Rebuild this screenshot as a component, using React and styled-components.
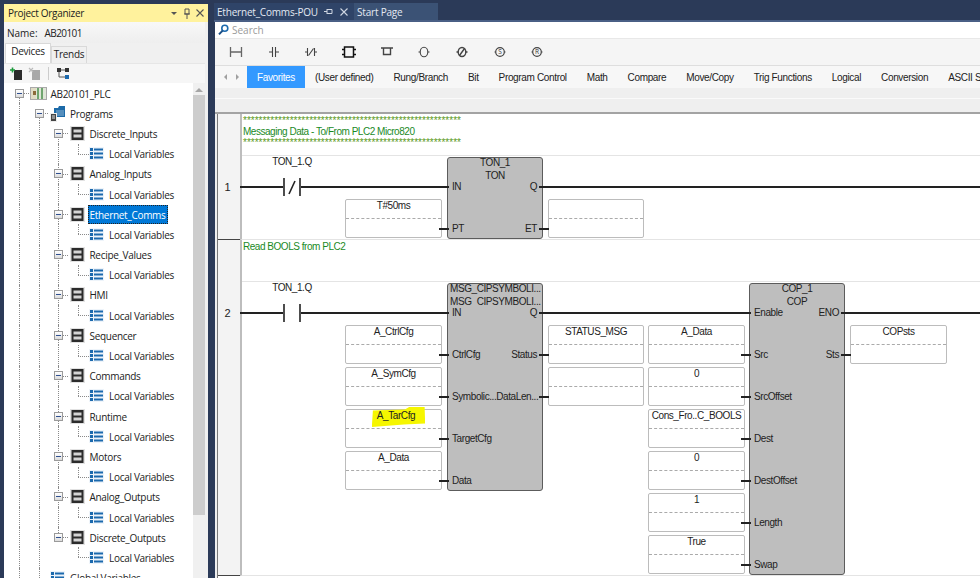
import React from "react";
import styled, { createGlobalStyle } from "styled-components";

const GlobalStyle = createGlobalStyle`
    html, body {
        margin: 0;
        padding: 0;
        background: #2b3a58;
    }
    * {
        box-sizing: border-box;
    }
`;

const uiFont = `"Open Sans", "Noto Sans", sans-serif`;
const ladderFont = `"Liberation Sans", Arial, sans-serif`;

const Page = styled.div`
    width: 980px;
    height: 578px;
    overflow: hidden;
    display: flex;
    background: #2b3a58;
    padding: 4px 0 0 4px;
    font-family: ${uiFont};
    color: #222;
`;

/* ---------- project organizer ---------- */

const Organizer = styled.aside`
    width: 204px;
    flex: none;
    height: 574px;
    display: flex;
    flex-direction: column;
    background: #f0f0f0;
    padding-right: 3px;
`;

const TitleBar = styled.div`
    height: 18px;
    margin-right: -3px;
    flex: none;
    display: flex;
    align-items: center;
    background: #fff29d;
    padding: 0 3px 0 4px;
    font-size: 10px;
    letter-spacing: -0.3px;
    span {
        flex: 1;
    }
    svg {
        margin-left: 3px;
    }
`;

const NameRow = styled.div`
    height: 21px;
    flex: none;
    display: flex;
    align-items: center;
    gap: 7px;
    padding-left: 3px;
    font-size: 10px;
    background: linear-gradient(to bottom, #f8f8f8, #eeeeee);
    span + span {
        letter-spacing: -0.6px;
    }
`;

const PanelTabs = styled.div`
    height: 20px;
    flex: none;
    display: flex;
    align-items: flex-end;
    padding-left: 1px;
`;

const PanelTab = styled.div`
    height: ${(props) => (props.$active ? "20px" : "17px")};
    width: ${(props) => props.$width}px;
    background: ${(props) => (props.$active ? "#fff" : "#f0f0f0")};
    border: 1px solid #d9d9d9;
    border-bottom: none;
    text-align: center;
    font-size: 10px;
    line-height: 15px;
    letter-spacing: -0.3px;
`;

const PanelToolbar = styled.div`
    height: 20px;
    flex: none;
    display: flex;
    align-items: center;
    background: #f6f6f6;
    border-top: 1px solid #e6e6e6;
    padding-left: 6px;
    gap: 6px;
    i {
        width: 1px;
        height: 13px;
        background: #ccc;
        margin: 0 2px;
    }
`;

const TreeWrap = styled.div`
    flex: 1;
    min-height: 0;
    display: flex;
    background: #fff;
`;

const Tree = styled.div`
    flex: 1;
    overflow: hidden;
    padding: 0 0 0 6px;
`;

const ScrollBar = styled.div`
    width: 12px;
    flex: none;
    background: #f0f0f0;
    display: flex;
    flex-direction: column;
    align-items: center;
    padding-top: 5px;
    i {
        width: 0;
        height: 0;
        border-left: 4px solid transparent;
        border-right: 4px solid transparent;
        border-bottom: 4px solid #a6a6a6;
    }
    b {
        width: 100%;
        height: 420px;
        margin-top: 3px;
        background: #cdcdcd;
    }
`;

const TreeRow = styled.div`
    height: 20.2px;
    display: flex;
    align-items: stretch;
    white-space: nowrap;
`;

const Guide = styled.div`
    width: 19.5px;
    flex: none;
    position: relative;
    &::before {
        content: "";
        display: ${(props) => (props.$off ? "none" : "block")};
        position: absolute;
        left: 9px;
        top: 0;
        bottom: 0;
        border-left: 1px dotted #8a8a8a;
    }
`;

const Branch = styled(Guide)`
    &::before {
        top: ${(props) => (props.$noTop ? "50%" : "0")};
        bottom: ${(props) => (props.$noBottom ? "50%" : "0")};
    }
    &::after {
        content: "";
        position: absolute;
        left: 9px;
        right: ${(props) => (props.$short ? "1px" : "-1px")};
        top: 50%;
        border-top: 1px dotted #8a8a8a;
    }
`;

const Expander = styled.span`
    position: absolute;
    z-index: 1;
    left: 5px;
    top: 5.5px;
    width: 9px;
    height: 9px;
    border: 1px solid #9a9a9a;
    background: linear-gradient(to bottom, #fff, #dcdcdc);
    &::after {
        content: "";
        position: absolute;
        left: 1px;
        right: 1px;
        top: 3px;
        height: 1px;
        background: #2f4f8f;
    }
`;

const NodeIcon = styled.span`
    flex: none;
    width: ${(props) => props.$width}px;
    display: flex;
    align-items: center;
    justify-content: center;
    margin-left: ${(props) => props.$left || 0}px;
`;

const NodeLabel = styled.span`
    align-self: center;
    margin-left: ${(props) => props.$left}px;
    font-size: 10px;
    letter-spacing: -0.3px;
    line-height: 18px;
    height: 19px;
    padding: 0 1px;
    border: 1px dotted ${(props) => (props.$selected ? "#222" : "transparent")};
    background: ${(props) => (props.$selected ? "#0078d7" : "transparent")};
    color: ${(props) => (props.$selected ? "#fff" : "#222")};
`;

/* ---------- editor ---------- */

const Editor = styled.main`
    flex: 1;
    min-width: 0;
    display: flex;
    flex-direction: column;
    margin-top: -1px;
    margin-left: 6px;
`;

const DocTabs = styled.div`
    height: 17px;
    flex: none;
    display: flex;
`;

const DocTab = styled.div`
    width: ${(props) => props.$width}px;
    display: flex;
    align-items: center;
    gap: 6px;
    padding-left: 3px;
    background: ${(props) => (props.$active ? "#2f4468" : "#3b5275")};
    color: #e4e9f2;
    font-size: 10px;
    letter-spacing: -0.2px;
    white-space: nowrap;
`;

const DocRule = styled.div`
    height: 2px;
    flex: none;
    background: #4a5f85;
`;

const Content = styled.div`
    flex: 1;
    min-height: 0;
    margin-left: 1px;
    display: flex;
    flex-direction: column;
    background: #efefef;
`;

const SearchRow = styled.div`
    height: 17px;
    flex: none;
    display: flex;
    align-items: center;
    gap: 3px;
    padding-left: 3px;
    background: #fff;
    border-bottom: 1px solid #e8e8e8;
    color: #9a9a9a;
    font-size: 10px;
`;

const InstrBar = styled.div`
    height: 27px;
    flex: none;
    display: flex;
    align-items: center;
    padding-left: 2px;
    background: #f5f5f5;
    border-bottom: 1px solid #dedede;
`;

const InstrButton = styled.div`
    width: 37.7px;
    display: flex;
    justify-content: center;
`;

const CategoryBar = styled.div`
    height: 22px;
    flex: none;
    display: flex;
    align-items: stretch;
    background: #f7f7f7;
    overflow: hidden;
    white-space: nowrap;
    font-family: ${ladderFont};
    font-size: 10px;
    letter-spacing: -0.35px;
`;

const CategoryArrows = styled.div`
    width: 32px;
    flex: none;
    display: flex;
    align-items: center;
    gap: 9px;
    padding-left: 9px;
    i {
        width: 0;
        height: 0;
        border-top: 3px solid transparent;
        border-bottom: 3px solid transparent;
    }
    i:first-child {
        border-right: 3px solid #a0a0a0;
    }
    i:last-child {
        border-left: 3px solid #a0a0a0;
    }
`;

const Category = styled.div`
    flex: none;
    display: flex;
    align-items: center;
    padding: 0 10px;
    background: ${(props) => (props.$active ? "#3399ff" : "transparent")};
    color: ${(props) => (props.$active ? "#fff" : "#222")};
`;

const BandRow = styled.div`
    height: 26px;
    flex: none;
    border-bottom: 2px solid #a3a3a3;
    &::before {
        content: "";
        display: block;
        height: 1px;
        margin-top: 10px;
        background: #fafafa;
    }
`;

const Ladder = styled.div`
    flex: 1;
    min-height: 0;
    margin-left: 2px;
    background: #fff;
    border-left: 1px solid #777;
    font-family: ${ladderFont};
    font-size: 10px;
    letter-spacing: -0.42px;
    color: #222;
`;

const Rung = styled.section`
    display: flex;
    height: ${(props) => props.$height}px;
`;

const Gutter = styled.div`
    width: 22px;
    flex: none;
    background: #f3f3f3;
    border-bottom: 1px solid #444;
    padding: 67px 3px 0 0;
    text-align: center;
    font-size: 11px;
    letter-spacing: 0;
    line-height: 12px;
`;

const RungBody = styled.div`
    flex: 1;
    min-width: 0;
    display: flex;
    flex-direction: column;
    border-left: 2px solid #bdbdbd;
    border-bottom: 1px solid #e4e4e4;
`;

const Comment = styled.div`
    height: 42px;
    flex: none;
    padding: 1px 0 0 1px;
    border-bottom: 1px solid #e4e4e4;
    color: #1a8a1f;
    line-height: 11px;
    letter-spacing: -0.47px;
    white-space: pre;
`;

const Stars = styled.div`
    color: #5a9a1a;
    letter-spacing: 0;
`;

const Logic = styled.div`
    flex: 1;
    min-height: 0;
    display: flex;
    align-items: flex-start;
`;

const Column = styled.div`
    flex: none;
    width: ${(props) => props.$width}px;
    display: flex;
    flex-direction: column;
`;

const RailSlot = styled.div`
    height: 43px;
    flex: none;
    padding-top: 30px;
`;

const Wire = styled.div`
    height: 2px;
    background: #222;
`;

const FillWire = styled.div`
    flex: 1;
    margin-top: 30px;
    height: 2px;
    background: #222;
`;

const Gap = styled.div`
    flex: none;
    width: ${(props) => props.$width}px;
    margin-top: 30px;
    height: 2px;
    background: #222;
`;

const ContactColumn = styled.div`
    flex: none;
    margin-left: -2px;
    width: 105px;
`;

const ContactLabel = styled.div`
    height: 22px;
    width: 104px;
    text-align: center;
    line-height: 12px;
`;

const ContactRail = styled.div`
    height: 18px;
    display: flex;
    align-items: center;
    ${Wire} {
        flex: 1;
    }
    ${Wire}:first-child {
        flex: none;
        width: 43px;
    }
`;

const ParamStack = styled.div`
    display: flex;
    flex-direction: column;
    gap: 3px;
`;

const Param = styled.div`
    height: 39px;
    background: #fff;
    border: 1px solid #bcbcbc;
    border-radius: 2px;
`;

const ParamValue = styled.div`
    height: 19px;
    border-bottom: 1px dashed #aaa;
    text-align: center;
    line-height: 11px;
    white-space: nowrap;
`;

const Marker = styled.span`
    display: inline-block;
    position: relative;
    z-index: 0;
    margin-left: 5px;
    &::before {
        content: "";
        position: absolute;
        z-index: -1;
        left: -5px;
        right: -10px;
        top: -3px;
        bottom: -6px;
        background: #f6f600;
        clip-path: polygon(2% 18%, 45% 14%, 62% 12%, 70% 0, 99% 0, 100% 82%, 60% 88%, 30% 94%, 0 100%);
    }
`;

const Block = styled.div`
    flex: none;
    width: 96px;
    margin-top: 1px;
    display: flex;
    flex-direction: column;
    gap: 28px;
    padding-bottom: 2px;
    background: #bebebe;
    border: 1px solid #5c5c5c;
    border-radius: 3px;
`;

const BlockTitle = styled.div`
    height: 22px;
    margin-bottom: -28px;
    padding: 0 2px;
    text-align: center;
    line-height: 13px;
    white-space: nowrap;
    overflow: hidden;
    div:first-child {
        margin-top: -2px;
    }
`;

const Pin = styled.div`
    height: 14px;
    display: flex;
    justify-content: space-between;
    align-items: center;
    padding: 0 5px 0 4px;
    white-space: nowrap;
    position: relative;
    top: -1px;
    &::before {
        content: "";
        position: absolute;
        left: -9px;
        width: 10px;
        height: 2px;
        top: 7px;
        background: #222;
        display: ${(props) => (props.$left ? "block" : "none")};
    }
    &::after {
        content: "";
        position: absolute;
        right: -7px;
        width: 10px;
        height: 2px;
        top: 7px;
        background: #222;
        display: ${(props) => (props.$right ? "block" : "none")};
    }
`;

/* ---------- drawings ---------- */

const FbIcon = () => (
    <svg width="15" height="15" viewBox="0 0 15 15">
        <rect width="15" height="15" fill="#e2e2e2" />
        <rect x="1.5" y="1" width="12" height="13" fill="#2b2b2b" />
        <rect x="3.5" y="3.5" width="8" height="3" fill="#d4d4d4" />
        <rect x="3.5" y="8.5" width="8" height="3" fill="#d4d4d4" />
    </svg>
);

const VarIcon = () => (
    <svg width="15" height="13" viewBox="0 0 15 13">
        <rect width="15" height="13" fill="#eef4fa" />
        <g fill="#1b69ad">
            <rect x="1" y="1" width="3" height="3" />
            <rect x="1" y="5" width="3" height="3" />
            <rect x="1" y="9" width="3" height="3" />
            <rect x="5" y="1.5" width="9" height="2" />
            <rect x="5" y="5.5" width="9" height="2" />
            <rect x="5" y="9.5" width="9" height="2" />
        </g>
    </svg>
);

const ControllerIcon = () => (
    <svg width="17" height="13" viewBox="0 0 17 13">
        <rect width="17" height="13" fill="#a9a9a9" />
        <rect x="1" y="1" width="15" height="11" fill="#dfe6d8" />
        <rect x="1" y="1" width="5" height="11" fill="#e0dcc4" />
        <rect x="3" y="4" width="3" height="4" fill="#8a6a3a" />
        <rect x="7" y="1" width="2" height="11" fill="#6fa56f" />
        <rect x="11" y="1" width="2" height="11" fill="#6fa56f" />
    </svg>
);

const ProgramsIcon = () => (
    <svg width="16" height="17" viewBox="0 0 16 17">
        <path d="M4 3h4l1-2h6v11H4z" fill="#1c6aa8" />
        <path d="M6 5h8v6H6z" fill="#fff" opacity="0.25" />
        <rect x="0" y="8" width="7" height="9" fill="#eee" />
        <rect x="1" y="9" width="5" height="7" fill="#444" />
        <path d="M2 11h3M2 13h3" stroke="#ddd" />
    </svg>
);

const Caret = () => (
    <svg width="10" height="10" viewBox="0 0 10 10">
        <path d="M2 4h6L5 7z" fill="#555" />
    </svg>
);

const PinIcon = () => (
    <svg width="10" height="11" viewBox="0 0 10 11">
        <path d="M3 1h4v5H3zM2 6h6M5 6v5" stroke="#555" fill="none" />
    </svg>
);

const DocPinIcon = () => (
    <svg width="9" height="9" viewBox="0 0 9 9">
        <path d="M0 4.5h3M3 2v5M3 2.5h5v4H3" stroke="#cfd6e2" fill="none" />
    </svg>
);

const CloseIcon = ({ color = "#555" }) => (
    <svg width="10" height="10" viewBox="0 0 10 10">
        <path d="M1.5 1.5l7 7M8.5 1.5l-7 7" stroke={color} strokeWidth="1.1" />
    </svg>
);

const AddIcon = () => (
    <svg width="12" height="13" viewBox="0 0 12 13">
        <rect x="4" y="3" width="8" height="10" fill="#2b2b2b" />
        <path d="M0 3h5M2.5 0.5v5" stroke="#1d9a3c" strokeWidth="1.6" />
    </svg>
);

const RemoveIcon = () => (
    <svg width="12" height="13" viewBox="0 0 12 13">
        <rect x="4" y="3" width="8" height="10" fill="#a8a8a8" />
        <path d="M1 1l4 4M5 1L1 5" stroke="#bbb" strokeWidth="1.2" />
    </svg>
);

const NetworkIcon = () => (
    <svg width="12" height="13" viewBox="0 0 12 13">
        <rect x="0" y="1" width="4" height="4" fill="#333" />
        <rect x="8" y="1" width="4" height="4" fill="#333" />
        <rect x="8" y="8" width="4" height="4" fill="#1b69ad" />
        <path d="M2 5v5h6M4 3h4" stroke="#555" fill="none" />
    </svg>
);

const SearchIcon = () => (
    <svg width="11" height="12" viewBox="0 0 11 12">
        <circle cx="6.8" cy="4.2" r="3" stroke="#1b69ad" strokeWidth="1.6" fill="none" />
        <path d="M4.6 6.6L1 10.4" stroke="#1b4f86" strokeWidth="2" />
    </svg>
);

const Instr = ({ children }) => (
    <svg width="16" height="16" viewBox="0 0 16 16" fill="none" stroke="#444" strokeWidth="1.1">
        {children}
    </svg>
);

const instrIcons = [
    <path key="rung" d="M2.5 3v10M13.5 3v10M2.5 8h11" stroke="#666" strokeWidth="1.3" />,
    <path key="contact" d="M3 8h3M10 8h3M6.5 3v10M9.5 3v10" />,
    <path key="nc" d="M2 8h2.5M11.5 8H14M4.5 4v8M11.5 4v8M5.5 11.5l5-7" />,
    <g key="block" stroke="#111">
        <rect x="3.5" y="3" width="9" height="10" strokeWidth="1.5" />
        <path d="M1 5.5h2.5M1 10.5h2.5M12.5 5.5H15M12.5 10.5H15" strokeWidth="1.5" />
    </g>,
    <path key="branch" d="M2 4h12M4.5 4v6.5h7V4" strokeWidth="1.4" />,
    <g key="coil">
        <ellipse cx="8" cy="8" rx="3.8" ry="4.8" />
        <path d="M2.5 8h1.7M11.8 8h1.7" />
    </g>,
    <g key="coil-nc" strokeWidth="1.4">
        <ellipse cx="8" cy="8" rx="3.8" ry="4.5" />
        <path d="M5.5 11.5l5-7M2.5 8h1.7M11.8 8h1.7" />
    </g>,
    <g key="set">
        <circle cx="8" cy="8" r="4.3" strokeWidth="1.2" />
        <path d="M2.5 8h1.2M12.3 8h1.2" />
        <text x="8" y="10.3" fontSize="6.5" textAnchor="middle" fill="#333" stroke="none">S</text>
    </g>,
    <g key="reset">
        <circle cx="8" cy="8" r="4.3" strokeWidth="1.2" />
        <path d="M2.5 8h1.2M12.3 8h1.2" />
        <text x="8" y="10.3" fontSize="6.5" textAnchor="middle" fill="#333" stroke="none">R</text>
    </g>,
];

const Contact = ({ closed }) => (
    <svg width="18" height="18" viewBox="0 0 18 18" style={{ flex: "none" }}>
        <path d="M1 0v18M17 0v18" stroke="#222" strokeWidth="1.6" />
        {closed && <path d="M6 16L12 3" stroke="#222" strokeWidth="1.6" />}
    </svg>
);

/* ---------- data ---------- */

const programs = [
    "Discrete_Inputs",
    "Analog_Inputs",
    "Ethernet_Comms",
    "Recipe_Values",
    "HMI",
    "Sequencer",
    "Commands",
    "Runtime",
    "Motors",
    "Analog_Outputs",
    "Discrete_Outputs",
];

const categories = [
    "Favorites",
    "(User defined)",
    "Rung/Branch",
    "Bit",
    "Program Control",
    "Math",
    "Compare",
    "Move/Copy",
    "Trig Functions",
    "Logical",
    "Conversion",
    "ASCII String",
];

const STARS = "*".repeat(56);

const FunctionBlock = ({ titles, pins }) => (
    <Block>
        <BlockTitle>
            {titles.map((title, i) => (
                <div key={i}>{title}</div>
            ))}
        </BlockTitle>
        {pins.map(([left, right], i) => (
            <Pin key={i} $left={left} $right={right}>
                <span>{left}</span>
                <span>{right}</span>
            </Pin>
        ))}
    </Block>
);

const ParamColumn = ({ width, values }) => (
    <Column $width={width}>
        <RailSlot>
            <Wire />
        </RailSlot>
        <ParamStack>
            {values.map((value, i) => (
                <Param key={i}>
                    <ParamValue>{value}</ParamValue>
                </Param>
            ))}
        </ParamStack>
    </Column>
);

const ContactCell = ({ closed }) => (
    <ContactColumn>
        <ContactLabel>TON_1.Q</ContactLabel>
        <ContactRail>
            <Wire />
            <Contact closed={closed} />
            <Wire />
        </ContactRail>
    </ContactColumn>
);

const ProjectTree = () => (
    <Tree>
        <TreeRow>
            <Branch $noTop $short>
                <Expander />
            </Branch>
            <NodeIcon $width={17}>
                <ControllerIcon />
            </NodeIcon>
            <NodeLabel $left={2}>AB20101_PLC</NodeLabel>
        </TreeRow>
        <TreeRow>
            <Guide />
            <Branch $noTop $short>
                <Expander />
            </Branch>
            <NodeIcon $width={16} $left={1}>
                <ProgramsIcon />
            </NodeIcon>
            <NodeLabel $left={2}>Programs</NodeLabel>
        </TreeRow>
        {programs.map((name, i) => {
            const first = i === 0;
            const last = i === programs.length - 1;
            return (
                <React.Fragment key={name}>
                    <TreeRow>
                        <Guide />
                        <Guide />
                        <Branch $noTop={first} $noBottom={last} $short>
                            <Expander />
                        </Branch>
                        <NodeIcon $width={15} $left={1}>
                            <FbIcon />
                        </NodeIcon>
                        <NodeLabel $left={3} $selected={name === "Ethernet_Comms"}>
                            {name}
                        </NodeLabel>
                    </TreeRow>
                    <TreeRow>
                        <Guide />
                        <Guide />
                        <Guide $off={last} />
                        <Branch $noBottom />
                        <NodeIcon $width={15} $left={1}>
                            <VarIcon />
                        </NodeIcon>
                        <NodeLabel $left={3}>Local Variables</NodeLabel>
                    </TreeRow>
                </React.Fragment>
            );
        })}
        <TreeRow>
            <Guide />
            <Branch $noBottom $short />
            <NodeIcon $width={15} $left={1}>
                <VarIcon />
            </NodeIcon>
            <NodeLabel $left={3}>Global Variables</NodeLabel>
        </TreeRow>
    </Tree>
);

const App = () => {
    return (
        <Page>
            <GlobalStyle />
            <Organizer>
                <TitleBar>
                    <span>Project Organizer</span>
                    <Caret />
                    <PinIcon />
                    <CloseIcon />
                </TitleBar>
                <NameRow>
                    <span>Name:</span>
                    <span>AB20101</span>
                </NameRow>
                <PanelTabs>
                    <PanelTab $active $width={46}>Devices</PanelTab>
                    <PanelTab $width={36}>Trends</PanelTab>
                </PanelTabs>
                <PanelToolbar>
                    <AddIcon />
                    <RemoveIcon />
                    <i />
                    <NetworkIcon />
                </PanelToolbar>
                <TreeWrap>
                    <ProjectTree />
                    <ScrollBar>
                        <i />
                        <b />
                    </ScrollBar>
                </TreeWrap>
            </Organizer>
            <Editor>
                <DocTabs>
                    <DocTab $active $width={140}>
                        <span>Ethernet_Comms-POU</span>
                        <DocPinIcon />
                        <CloseIcon color="#cfd6e2" />
                    </DocTab>
                    <DocTab $width={84}>Start Page</DocTab>
                </DocTabs>
                <DocRule />
                <Content>
                    <SearchRow>
                        <SearchIcon />
                        <span>Search</span>
                    </SearchRow>
                    <InstrBar>
                        {instrIcons.map((icon) => (
                            <InstrButton key={icon.key}>
                                <Instr>{icon}</Instr>
                            </InstrButton>
                        ))}
                    </InstrBar>
                    <CategoryBar>
                        <CategoryArrows>
                            <i />
                            <i />
                        </CategoryArrows>
                        {categories.map((name) => (
                            <Category key={name} $active={name === "Favorites"}>
                                {name}
                            </Category>
                        ))}
                    </CategoryBar>
                    <BandRow />
                    <Ladder>
                        <Rung $height={126}>
                            <Gutter>1</Gutter>
                            <RungBody>
                                <Comment>
                                    <Stars>{STARS}</Stars>
                                    <div>Messaging Data - To/From PLC2 Micro820</div>
                                    <Stars>{STARS}</Stars>
                                </Comment>
                                <Logic>
                                    <ContactCell closed />
                                    <ParamColumn width={97} values={["T#50ms"]} />
                                    <Gap $width={5} />
                                    <FunctionBlock
                                        titles={["TON_1", "TON"]}
                                        pins={[["IN", "Q"], ["PT", "ET"]]}
                                    />
                                    <Gap $width={5} />
                                    <ParamColumn width={96} values={[""]} />
                                    <FillWire />
                                </Logic>
                            </RungBody>
                        </Rung>
                        <Rung $height={336}>
                            <Gutter>2</Gutter>
                            <RungBody>
                                <Comment>Read BOOLS from PLC2</Comment>
                                <Logic>
                                    <ContactCell />
                                    <ParamColumn
                                        width={97}
                                        values={[
                                            "A_CtrlCfg",
                                            "A_SymCfg",
                                            <Marker key="marker">A_TarCfg</Marker>,
                                            "A_Data",
                                        ]}
                                    />
                                    <Gap $width={5} />
                                    <FunctionBlock
                                        titles={["MSG_CIPSYMBOLI...", "MSG_CIPSYMBOLI..."]}
                                        pins={[
                                            ["IN", "Q"],
                                            ["CtrlCfg", "Status"],
                                            ["Symbolic...", "DataLen..."],
                                            ["TargetCfg", ""],
                                            ["Data", ""],
                                        ]}
                                    />
                                    <Gap $width={5} />
                                    <ParamColumn width={96} values={["STATUS_MSG", ""]} />
                                    <Gap $width={4} />
                                    <ParamColumn
                                        width={97}
                                        values={["A_Data", "0", "Cons_Fro..C_BOOLS", "0", "1", "True"]}
                                    />
                                    <Gap $width={4} />
                                    <FunctionBlock
                                        titles={["COP_1", "COP"]}
                                        pins={[
                                            ["Enable", "ENO"],
                                            ["Src", "Sts"],
                                            ["SrcOffset", ""],
                                            ["Dest", ""],
                                            ["DestOffset", ""],
                                            ["Length", ""],
                                            ["Swap", ""],
                                        ]}
                                    />
                                    <Gap $width={5} />
                                    <ParamColumn width={97} values={["COPsts"]} />
                                    <FillWire />
                                </Logic>
                            </RungBody>
                        </Rung>
                    </Ladder>
                </Content>
            </Editor>
        </Page>
    );
};

export default App;
